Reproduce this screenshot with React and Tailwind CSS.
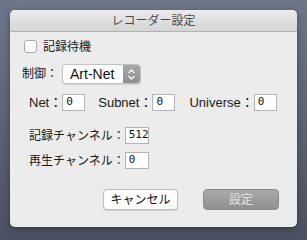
import React from "react";

const font = { fontFamily: '"Liberation Sans", "Noto Sans CJK JP", sans-serif' };

function Field({ value, width = "w-[23px]" }) {
  return (
    <div
      className={`${width} h-[17px] bg-white border border-[#b4b4b4] pl-[3px] flex items-center text-[11px] text-[#111] font-['DejaVu_Sans_Mono',monospace]`}
    >
      {value}
    </div>
  );
}

export default function App() {
  return (
    <div
      className="w-[307px] h-[240px] bg-gradient-to-b from-[#6e768a] to-[#4b5162] pt-[10px] pl-[10px]"
      style={font}
    >
      <div className="w-[287px] h-[217px] rounded-[5px] bg-[#ececec] overflow-hidden shadow-[0_2px_6px_rgba(0,0,0,0.35)] flex flex-col text-[13px] text-[#1a1a1a]">
        {/* title bar */}
        <div className="h-[22px] shrink-0 bg-gradient-to-b from-[#ebebeb] to-[#d5d5d5] border-b border-[#b3b3b3] flex items-center justify-center text-[#4b4b4b] text-[12px]">
          レコーダー設定
        </div>

        <div className="flex flex-col pl-[14px] pr-[18px]">
          {/* checkbox */}
          <div className="mt-[8px] flex items-center gap-[6px] h-[13px]">
            <div className="w-[13px] h-[13px] rounded-[3px] bg-white border border-[#a9a9a9]" />
            <span className="text-[12px]">記録待機</span>
          </div>

          {/* control */}
          <div className="mt-[11px] flex items-center h-[20px] -ml-[2px]">
            <span className="w-[40px] text-[12px]">制御：</span>
            <div className="w-[79px] h-[20px] rounded-[4px] border border-[#c2c2c2] bg-white flex overflow-hidden shadow-[0_1px_1px_rgba(0,0,0,0.12)]">
              <div className="flex-1 flex items-center pl-[7px] text-[14px] text-[#111]">Art-Net</div>
              <div className="w-[17px] bg-gradient-to-b from-[#a8a8a8] to-[#8f8f8f] flex items-center justify-center">
                <svg width="9" height="13" viewBox="0 0 9 13" fill="none" stroke="#fff" strokeWidth="1.3">
                  <path d="M1.5 5 L4.5 2 L7.5 5" />
                  <path d="M1.5 8 L4.5 11 L7.5 8" />
                </svg>
              </div>
            </div>
          </div>

          {/* net row */}
          <div className="mt-[10px] pl-[5px] flex items-center h-[17px]">
            <span>Net：</span>
            <Field value="0" />
            <span className="ml-[13px]">Subnet：</span>
            <Field value="0" />
            <span className="ml-[14px]">Universe：</span>
            <Field value="0" />
          </div>

          {/* channels */}
          <div className="mt-[16px] pl-[5px] flex items-center h-[17px]">
            <span className="text-[12px]">記録チャンネル：</span>
            <Field value="512" width="w-[24px]" />
          </div>
          <div className="mt-[8px] pl-[5px] flex items-center h-[17px]">
            <span className="text-[12px]">再生チャンネル：</span>
            <Field value="0" width="w-[24px]" />
          </div>

          {/* buttons */}
          <div className="mt-[20px] flex justify-end gap-[25px]">
            <div className="w-[75px] h-[21px] rounded-[4px] bg-white border border-[#bdbdbd] shadow-[0_1px_1px_rgba(0,0,0,0.12)] flex items-center justify-center text-[12px] text-[#111]">
              キャンセル
            </div>
            <div className="w-[76px] h-[21px] rounded-[4px] bg-gradient-to-b from-[#a9a9a9] to-[#909090] border border-[#8a8a8a] flex items-center justify-center text-[12px] text-[#e4e4e4]">
              設定
            </div>
          </div>
        </div>
      </div>
    </div>
  );
}
